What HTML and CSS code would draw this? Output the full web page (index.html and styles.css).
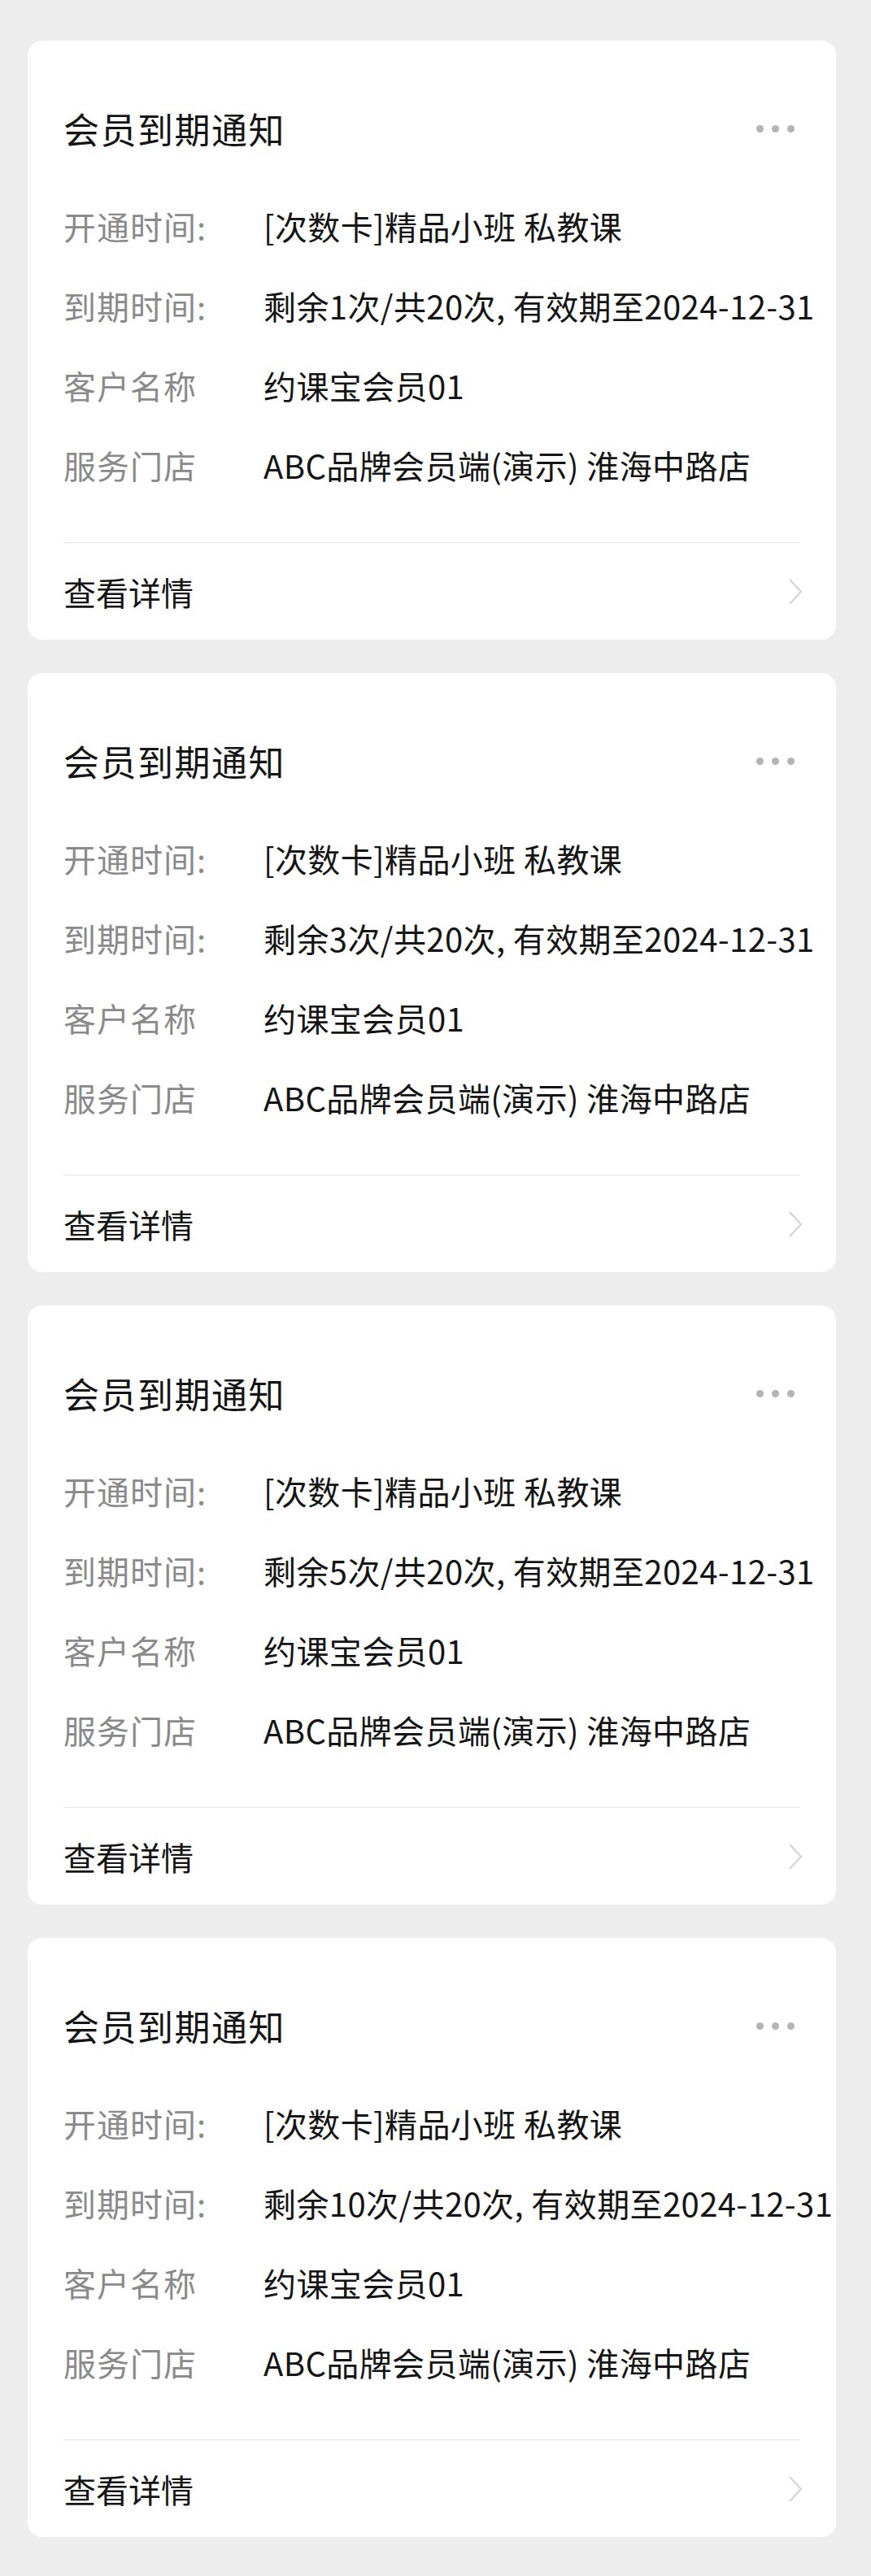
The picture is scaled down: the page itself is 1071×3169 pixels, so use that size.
FILE: index.html
```html
<!DOCTYPE html>
<html lang="zh-CN">
<head>
  <meta charset="UTF-8">
  <meta name="viewport" content="width=device-width, initial-scale=1.0">
  <title>会员到期通知</title>
  <link rel="stylesheet" href="styles.css">
</head>
<body>
  <div class="list">

    <!-- card 1 -->
    <div class="card">
      <div class="card-head">
        <span class="card-title">会员到期通知</span>
        <span class="more"><i></i><i></i><i></i></span>
      </div>
      <div class="info">
        <div class="row"><span class="label">开通时间:</span><span class="value">[次数卡]精品小班 私教课</span></div>
        <div class="row"><span class="label">到期时间:</span><span class="value">剩余1次/共20次, 有效期至2024-12-31</span></div>
        <div class="row"><span class="label">客户名称</span><span class="value">约课宝会员01</span></div>
        <div class="row"><span class="label">服务门店</span><span class="value">ABC品牌会员端(演示) 淮海中路店</span></div>
      </div>
      <div class="card-foot">
        <span>查看详情</span>
        <svg class="arrow" width="20" height="34" viewBox="0 0 20 34"><polyline points="3,2 17,17 3,32" fill="none" stroke="#d2d2d2" stroke-width="2"/></svg>
      </div>
    </div>

    <!-- card 2 -->
    <div class="card">
      <div class="card-head">
        <span class="card-title">会员到期通知</span>
        <span class="more"><i></i><i></i><i></i></span>
      </div>
      <div class="info">
        <div class="row"><span class="label">开通时间:</span><span class="value">[次数卡]精品小班 私教课</span></div>
        <div class="row"><span class="label">到期时间:</span><span class="value">剩余3次/共20次, 有效期至2024-12-31</span></div>
        <div class="row"><span class="label">客户名称</span><span class="value">约课宝会员01</span></div>
        <div class="row"><span class="label">服务门店</span><span class="value">ABC品牌会员端(演示) 淮海中路店</span></div>
      </div>
      <div class="card-foot">
        <span>查看详情</span>
        <svg class="arrow" width="20" height="34" viewBox="0 0 20 34"><polyline points="3,2 17,17 3,32" fill="none" stroke="#d2d2d2" stroke-width="2"/></svg>
      </div>
    </div>

    <!-- card 3 -->
    <div class="card">
      <div class="card-head">
        <span class="card-title">会员到期通知</span>
        <span class="more"><i></i><i></i><i></i></span>
      </div>
      <div class="info">
        <div class="row"><span class="label">开通时间:</span><span class="value">[次数卡]精品小班 私教课</span></div>
        <div class="row"><span class="label">到期时间:</span><span class="value">剩余5次/共20次, 有效期至2024-12-31</span></div>
        <div class="row"><span class="label">客户名称</span><span class="value">约课宝会员01</span></div>
        <div class="row"><span class="label">服务门店</span><span class="value">ABC品牌会员端(演示) 淮海中路店</span></div>
      </div>
      <div class="card-foot">
        <span>查看详情</span>
        <svg class="arrow" width="20" height="34" viewBox="0 0 20 34"><polyline points="3,2 17,17 3,32" fill="none" stroke="#d2d2d2" stroke-width="2"/></svg>
      </div>
    </div>

    <!-- card 4 -->
    <div class="card">
      <div class="card-head">
        <span class="card-title">会员到期通知</span>
        <span class="more"><i></i><i></i><i></i></span>
      </div>
      <div class="info">
        <div class="row"><span class="label">开通时间:</span><span class="value">[次数卡]精品小班 私教课</span></div>
        <div class="row"><span class="label">到期时间:</span><span class="value">剩余10次/共20次, 有效期至2024-12-31</span></div>
        <div class="row"><span class="label">客户名称</span><span class="value">约课宝会员01</span></div>
        <div class="row"><span class="label">服务门店</span><span class="value">ABC品牌会员端(演示) 淮海中路店</span></div>
      </div>
      <div class="card-foot">
        <span>查看详情</span>
        <svg class="arrow" width="20" height="34" viewBox="0 0 20 34"><polyline points="3,2 17,17 3,32" fill="none" stroke="#d2d2d2" stroke-width="2"/></svg>
      </div>
    </div>

  </div>
</body>
</html>
```

FILE: styles.css
```css
body {
  margin: 0;
  padding: 0;
  background: #ededed;
  font-family: "Noto Sans CJK SC", "Noto Sans", sans-serif;
  color: #151515;
}

.list {
  display: flex;
  flex-direction: column;
  gap: 41px;
  padding: 50px 43px 48px 34px;
}

.card {
  background: #fff;
  border-radius: 18px;
  padding: 78px 44px 0 44px;
  height: 737px;
  box-sizing: border-box;
}

.card-head {
  display: flex;
  align-items: center;
  justify-content: space-between;
  height: 60px;
}
.card-title {
  font-size: 44px;
  line-height: 60px;
  letter-spacing: 1.5px;
}
.more {
  display: flex;
  gap: 10px;
  margin-right: 7px;
}
.more i {
  width: 9px;
  height: 9px;
  border-radius: 50%;
  background: #b3b3b3;
}

.info {
  padding-top: 41px;
  margin-bottom: 46px;
}
.row {
  display: flex;
  height: 98px;
  line-height: 98px;
  font-size: 40px;
  white-space: nowrap;
}
.label {
  width: 246px;
  flex-shrink: 0;
  color: #8a8a8a;
  letter-spacing: 1px;
}
.value {
  color: #151515;
  letter-spacing: 0.4px;
}

.card-foot {
  display: flex;
  align-items: center;
  justify-content: space-between;
  height: 119px;
  border-top: 1px solid #e6e6e6;
  font-size: 40px;
}
.arrow {
  margin-right: -4px;
}
```
